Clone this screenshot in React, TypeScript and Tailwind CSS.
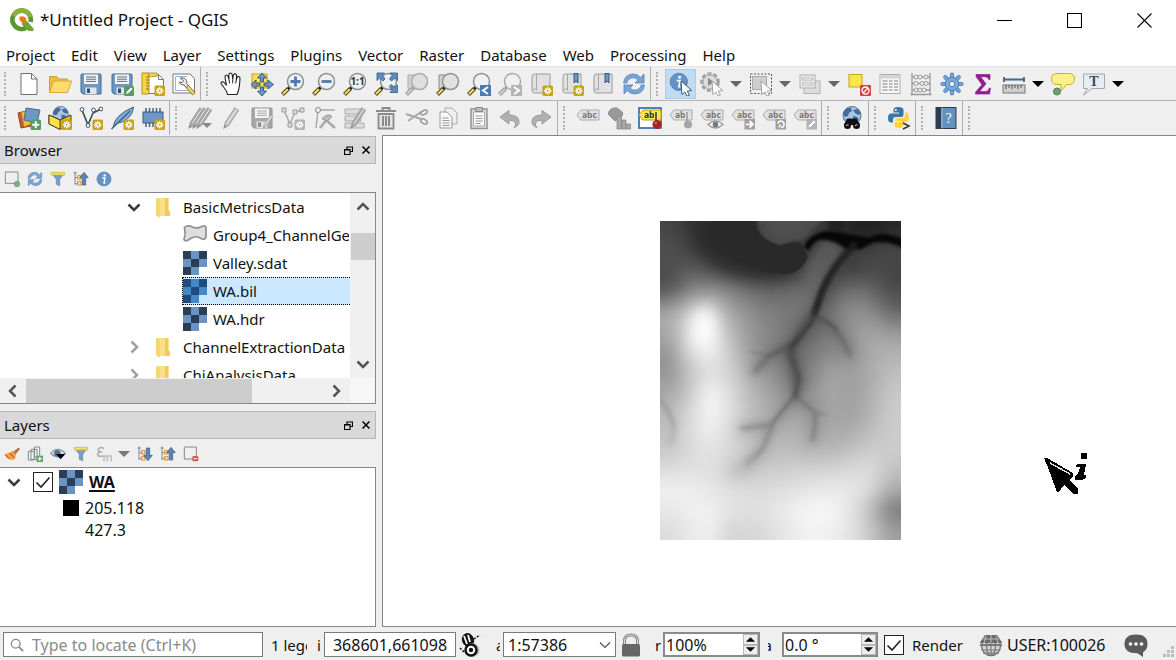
import React, { useState } from "react";

type Kids = { children?: React.ReactNode };

const Svg = ({ children, size = "size-6" }: Kids & { size?: string }) => (
  <svg viewBox="0 0 24 24" className={`${size} shrink-0`} fill="none" aria-hidden="true">
    {children}
  </svg>
);

const NewBadge = ({ gray = false }: { gray?: boolean }) => (
  <g>
    <rect x="13.500" y="13.500" width="10.500" height="10.500" rx="1.600" fill={gray ? "#b4b4b4" : "#c8a312"} />
    <path d="M18.750 15v7.500M15 18.750h7.500M16.200 16.200l5.100 5.100M21.300 16.200l-5.100 5.100" stroke="#fff" strokeWidth="1.300" />
    <circle cx="18.750" cy="18.750" r="1" fill={gray ? "#b4b4b4" : "#c8a312"} />
  </g>
);

const Lens = ({ gray = false, fill = "#eef1f3", children }: Kids & { gray?: boolean; fill?: string }) => (
  <g>
    <path d="M1.500 22.500l6-6" stroke={gray ? "#9b9b9b" : "#4b4420"} strokeWidth="4" />
    <path d="M2 22l5-5" stroke={gray ? "#cfcfcf" : "#f5dc5a"} strokeWidth="2.200" />
    <path d="M7 17l3-3" stroke={gray ? "#a5a5a5" : "#1c1c1c"} strokeWidth="2.800" />
    <circle cx="14.500" cy="9.500" r="8" fill={fill} stroke={gray ? "#a9a9a9" : "#8b8f92"} strokeWidth="1.500" />
    {children}
  </g>
);

const Floppy = ({ gray = false }: { gray?: boolean }) => (
  <g>
    <path d="M2 3q0-1 1-1h18q1 0 1 1v19H4l-2-2z" fill={gray ? "#a8a8a8" : "#6d97c4"} stroke={gray ? "#8e8e8e" : "#48698d"} />
    <rect x="5" y="2.500" width="14" height="9.500" fill="#f4f4f4" />
    <path d="M7 5h10M7 7.200h10M7 9.400h10" stroke={gray ? "#a8a8a8" : "#5d6b78"} />
    <rect x="6.500" y="15.500" width="11" height="6.500" fill="#dfe5ea" />
    <rect x="8" y="16.500" width="3" height="4.500" fill={gray ? "#8e8e8e" : "#33506e"} />
  </g>
);

const Pencil = ({ dx = 0, fill = "#c8c8c8" }: { dx?: number; fill?: string }) => (
  <g transform={`translate(${dx} 0)`}>
    <path d="M5 22l1.300-5.500L15.800 2l3.600 2.300L9.800 19z" fill={fill} stroke="#a3a3a3" strokeWidth="1.100" />
    <path d="M8.200 17.600L17.600 3.200" stroke="#f0f0f0" strokeWidth="1" />
    <path d="M5 22l.8-2.800 1.700 1.100z" fill="#888" />
  </g>
);

const Arrow = ({ gray = false }: { gray?: boolean }) => (
  <path d="M12 9l10.800 9.500-4.600.6 2.200 4.100-2.400 1-2.100-4.200-3 2.600z" fill="#fff" stroke={gray ? "#a2a2a2" : "#44586c"} strokeWidth="1" />
);

const Sheet = ({ x = 3 }: { x?: number }) => (
  <g transform={`translate(${x} 0)`}>
    <path d="M4 2h14v19H2.500Q0 21 0 18.500V5q0-3 2.500-3z" fill="#e1e1e1" stroke="#9a9a9a" />
    <path d="M4.500 2v16.500M0 18.500q.5-1.500 2.500-1.500h2" stroke="#a8a8a8" />
  </g>
);

const Ribbon = ({ x = 14 }: { x?: number }) => (
  <path d={`M${x} 1.500h4v9.500l-2-2-2 2z`} fill="#6d97c4" stroke="#36577b" />
);

const Tag = ({ text = "abc", color = false }: { text?: string; color?: boolean }) => (
  <g>
    <path d="M1 9l4-5h18v10H5z" fill={color ? "#fce94f" : "#e2e2e2"} stroke={color ? "#c4a000" : "#aaa"} />
    <text x="6" y="12" fontSize="8.500" fontWeight="700" fontFamily="Noto Sans, sans-serif" fill={color ? "#333" : "#777"}>
      {text}
    </text>
  </g>
);

const Refresh = () => (
  <g>
    <path d="M1.500 11Q2.500 2.500 11 2q5 0 7.500 3.500L22 2v9h-9l3-3q-2-2.300-5-2.200-5 .2-6.200 5.200z" fill="#78a5d6" stroke="#5684b7" strokeWidth=".8" />
    <path d="M22.500 13Q21.500 21.500 13 22q-5 0-7.500-3.500L2 22v-9h9l-3 3q2 2.300 5 2.200 5-.2 6.200-5.200z" fill="#78a5d6" stroke="#5684b7" strokeWidth=".8" />
  </g>
);

const Funnel = () => (
  <g>
    <path d="M2.500 3.500h19l-7 9V22l-5-2v-7.500z" fill="#7aa0c8" stroke="#5a7da3" />
    <path d="M2 2h20v4H2z" fill="#f2e15c" stroke="#c7b340" />
  </g>
);

const Info = () => (
  <g>
    <circle cx="12" cy="12" r="10.500" fill="#6593c6" stroke="#4f7aa9" />
    <circle cx="13" cy="6.500" r="1.800" fill="#fff" />
    <path d="M9.500 10.500h4l-1.500 7.500h2" stroke="#fff" strokeWidth="2" />
  </g>
);

const Globe = () => (
  <g>
    <circle cx="12" cy="9.500" r="9" fill="#a9c5e3" stroke="#4f6f95" />
    <path d="M5 4q3-3 6-2l1 3-3 2-1 3-3 1-2-3zM13 4l5-1 3 5-3 1-3-2zM13 10l4 1 2 2-4 5-2-3zM4 13l4 1v3z" fill="#456b9a" />
  </g>
);

const TreeArrow = ({ up = true }: { up?: boolean }) => (
  <g>
    <path d="M3 1v20M1 3h5M3 10h5M3 19h5" stroke="#888" strokeWidth="1.500" />
    <rect x="7" y="7" width="5" height="5" fill="#fce7c4" stroke="#e28b2d" strokeWidth="1.500" />
    <rect x="7" y="16" width="5" height="5" fill="#fce7c4" stroke="#e28b2d" strokeWidth="1.500" />
    <path
      d={up ? "M16.500 2l6.500 8h-4v11h-5V10h-4z" : "M16.500 22l6.500-8h-4V3h-5v11h-4z"}
      fill="#5b86b4"
      stroke="#35587f"
    />
  </g>
);

type Tool = { name: string; art: React.ReactNode; menu?: "gray" | "black"; active?: boolean };

const fileTools: Tool[] = [
  { name: "New Project", art: <><path d="M4 1.500h10.500L20 7v15.500H4z" fill="#fff" stroke="#6e6e6e" /><path d="M14.500 1.500V7H20" stroke="#6e6e6e" /></> },
  { name: "Open Project", art: <><path d="M1.500 20V4.500h7l2 2.500h9v4" fill="#eabf45" stroke="#cb9f35" /><path d="M1.500 20.500L5.500 9h18l-4 11.500z" fill="#fddb6d" stroke="#d6a83c" /></> },
  { name: "Save Project", art: <Floppy /> },
  { name: "Save Project As", art: <><Floppy /><rect x="14" y="14" width="10" height="10" rx="1.600" fill="#5a9a63" /><path d="M16 22l1-2.500 4-4 1.500 1.500-4 4z" fill="#fff" /></> },
  { name: "New Print Layout", art: <><path d="M3.500 2.500h14l5 5v14h-19z" fill="#fff" stroke="#777" /><path d="M17.500 2.500v5h5" stroke="#777" /><path d="M1 1h7v21H1z" fill="#f5d445" stroke="#b28f1c" /><path d="M8 1h8v3.500H8z" fill="#f5d445" stroke="#b28f1c" strokeWidth=".8" /><path d="M5 5h3M5 8h3M5 11h3M5 14h3M5 17h3" stroke="#8a7016" /><NewBadge /></> },
  { name: "Layout Manager", art: <><path d="M1 2h17l4.500 4.500V21H1z" fill="#fff" stroke="#777" /><path d="M3.500 4.500h12M3.500 4.500v14h15" stroke="#9cb6d2" /><path d="M14 13l8 9" stroke="#8a7a2c" strokeWidth="4" /><path d="M14.500 13.500l7 8" stroke="#f3dc70" strokeWidth="2.200" /><path d="M8 6q5-1 6.500 2.500.5 2 0 3l2 2.500-2 1.500-2.500-2.500q-3.500.5-5-3l3 .5 1.500-2z" fill="#e7e7e7" stroke="#666" /></> },
];

const navTools: Tool[] = [
  { name: "Pan Map", art: <><path d="M8.500 22.500q-.5-3.500-3.500-7L2.300 12q-.8-2 1-2.300 1.500 0 2.700 1.800l1.500 1.800L6 5.500q-.2-2 1.200-2.200T9.300 5l.7 2.500L9.800 3q.2-2 1.600-2t1.800 1.800l.5 4.500.6-4q.5-1.600 1.800-1.400t1.500 1.700L17.300 8l.7-2.500q.5-1.300 1.700-1t1.300 1.900q-.2 4-.7 8-.5 4-2.300 8.100z" fill="#fff" stroke="#222" strokeWidth="1.100" /><path d="M10 7.500l.7 4M13.700 7.300v4M17.300 8l-.6 3.500" stroke="#222" strokeWidth="1" /></> },
  { name: "Pan Map to Selection", art: <><rect x="2" y="2" width="15" height="14" fill="#fce04b" stroke="#c5a21f" /><path d="M12 1l4.500 5h-3v4h-3V6h-3zM12 24l4.500-5h-3v-4h-3v4h-3zM1 12.500L6 8v3h4v3H6v3zM23.500 12.500L18 8v3h-4v3h4v3z" fill="#6d97c4" stroke="#2f5175" strokeWidth=".9" /></> },
  { name: "Zoom In", art: <Lens><path d="M14.500 4.500v10M9.500 9.500h10" stroke="#4c7cae" strokeWidth="2.800" /></Lens> },
  { name: "Zoom Out", art: <Lens><path d="M9.500 9.500h10" stroke="#4c7cae" strokeWidth="2.800" /></Lens> },
  { name: "Zoom to Native Resolution", art: <Lens><text x="14.500" y="13" textAnchor="middle" fontSize="10" fontWeight="700" fontFamily="Noto Sans, sans-serif" fill="#333">1:1</text></Lens> },
  { name: "Zoom Full", art: <Lens><path d="M3 1h7.500L8.300 3.300 11 7 9 9 5.500 6 3 8.500zM23.500 1H16l2.200 2.300L15.500 7l2 2L21 6l2.500 2.500zM23.500 20.500H16l2.200-2.500-3-3.500 2-2 3.500 3 2.800-2.500z" fill="#5d8dbd" stroke="#335a84" strokeWidth=".8" /></Lens> },
  { name: "Zoom to Selection", art: <><path d="M3 3h9v14H3z" fill="#d2d2d2" stroke="#aaa" /><Lens gray fill="#dedede" /></> },
  { name: "Zoom to Layer", art: <><path d="M3 3h9v14H3z" fill="#d2d2d2" stroke="#888" /><Lens fill="#e1e1db" /></> },
  { name: "Zoom Last", art: <><Lens /><rect x="13" y="13" width="11" height="11" fill="#4c7cae" /><path d="M21 15l-5 3.500 5 3.500" stroke="#fff" strokeWidth="2" /></> },
  { name: "Zoom Next", art: <><Lens gray /><rect x="13" y="13" width="11" height="11" fill="#b4b4b4" /><path d="M16 15l5 3.500-5 3.500" stroke="#fff" strokeWidth="2" /></> },
  { name: "New Map View", art: <><Sheet /><NewBadge /></> },
  { name: "New Spatial Bookmark", art: <><Sheet /><Ribbon /><NewBadge /></> },
  { name: "Show Spatial Bookmarks", art: <><Sheet x={3} /><Ribbon x={14} /></> },
  { name: "Refresh", art: <Refresh /> },
];

const attributeTools: Tool[] = [
  { name: "Identify Features", active: true, art: <><g transform="scale(.82)"><Info /></g><Arrow /></> },
  { name: "Run Feature Action", menu: "gray", art: <><circle cx="10" cy="10" r="8.500" fill="#d7d7d7" stroke="#a0a0a0" strokeWidth="2.600" strokeDasharray="4 2.200" /><circle cx="10" cy="10" r="7" fill="#dcdcdc" stroke="#aaa" /><path d="M8 6v8l6-4z" fill="#888" /><Arrow gray /></> },
  { name: "Select Features", menu: "gray", art: <><rect x="3.500" y="4.500" width="14" height="13" fill="#cfcfcf" stroke="#aaa" /><rect x="1.500" y="2" width="21" height="19.500" stroke="#555" strokeDasharray="2 1.500" /><Arrow gray /></> },
  { name: "Select by Value", menu: "gray", art: <><rect x="6" y="9" width="16" height="12.500" fill="#ddd" stroke="#b0b0b0" /><rect x="2" y="3" width="15" height="13" fill="#e8e8e8" stroke="#b0b0b0" /><path d="M4.500 6h10v2h-10zM4.500 11h10v2h-10z" fill="#fff" stroke="#aaa" strokeWidth=".8" /></> },
  { name: "Deselect Features", art: <><rect x="2" y="2.500" width="13" height="12.500" fill="#fce74a" stroke="#c5a21f" /><rect x="13" y="13" width="11" height="11" rx="1" fill="#d84141" /><circle cx="18.500" cy="18.500" r="3.500" stroke="#fff" strokeWidth="1.300" /><path d="M16 21l5-5" stroke="#fff" strokeWidth="1.300" /></> },
  { name: "Open Attribute Table", art: <><rect x="2" y="2.500" width="20" height="19" fill="#f6f6f6" stroke="#b0b0b0" /><path d="M2.500 3h19v3.500h-19z" fill="#d4d4d4" /><path d="M4.500 9h5M11 9h3.500M16 9h4M4.500 12h5M11 12h3.500M16 12h4M4.500 15h5M11 15h3.500M16 15h4M4.500 18h5M11 18h3.500M16 18h4" stroke="#a8a8a8" strokeWidth="1.300" /></> },
  { name: "Field Calculator", art: <><path d="M3 1v21M21 1v21M1.500 22.500h21M3 5h18M3 11.500h18M3 18h18" stroke="#999" strokeWidth="1.300" /><g fill="#f3f3f3" stroke="#999"><circle cx="7" cy="5" r="2" /><circle cx="11" cy="5" r="2" /><circle cx="17" cy="5" r="2" /><circle cx="7" cy="11.500" r="2" /><circle cx="13" cy="11.500" r="2" /><circle cx="17" cy="11.500" r="2" /><circle cx="7" cy="18" r="2" /><circle cx="11" cy="18" r="2" /><circle cx="15" cy="18" r="2" /></g></> },
  { name: "Toolbox", art: <><g stroke="#4d7db4" strokeWidth="4.200" strokeLinecap="round"><path d="M12 2.500v19M2.500 12h19M5.300 5.300l13.400 13.400M18.700 5.300L5.300 18.700" /></g><g stroke="#7ba8dc" strokeWidth="2.600" strokeLinecap="round"><path d="M12 2.500v19M2.500 12h19M5.300 5.300l13.400 13.400M18.700 5.300L5.300 18.700" /></g><circle cx="12" cy="12" r="6.800" fill="#7ba8dc" stroke="#4d7db4" /><circle cx="12" cy="12" r="2.800" fill="#eee" stroke="#4d7db4" /></> },
  { name: "Show Statistical Summary", art: <path d="M5 2.500h14v5h-1.200Q17 4.800 14 4.800H9.500l5.500 7-6.500 7.700h6q3 0 4-3.500h1l-1 6H4.500v-1.800L11 12.800 5 4.500z" fill="#961a96" stroke="#7e107e" strokeWidth=".6" /> },
  { name: "Measure Line", menu: "black", art: <><path d="M2 7.500h20M2 5v5M22 5v5" stroke="#3d658f" strokeWidth="1.800" /><rect x="1" y="13" width="22" height="8" fill="#cfcfcf" stroke="#777" /><path d="M4 13v4M7 13v3M10 13v4M13 13v3M16 13v4M19 13v3" stroke="#555" /></> },
  { name: "Show Map Tips", art: <><path d="M6 1.500h12q5.500 0 5.500 5.500t-5.500 5.500h-2.500L10 19v-6.500H6Q.5 12.500.5 7T6 1.500z" fill="#fdf088" stroke="#c9af37" /><circle cx="6" cy="19.500" r="3.500" fill="#6ca26f" stroke="#4b7e50" /></> },
  { name: "Text Annotation", menu: "black", art: <><path d="M1.500 2h21v14.500H10L1.500 23l4-6.500h-4z" fill="#e4edf3" stroke="#a3a9ae" /><text x="12" y="14" textAnchor="middle" fontSize="14" fontWeight="700" fontFamily="Liberation Serif, serif" fill="#3b4a4c">T</text></> },
];

const dataTools: Tool[] = [
  { name: "Data Source Manager", art: <><path d="M1 7l9-2 4 15-10 2z" fill="#d2562f" stroke="#963e20" /><path d="M4 6l11-2 2 13-10 4z" fill="#f0bc3c" stroke="#b27e20" /><path d="M9 2l14 2-3 13-13-3z" fill="#6d97c4" stroke="#456c96" /><rect x="13.500" y="13.500" width="10.500" height="10.500" rx="1.600" fill="#5a9a63" /><path d="M18.750 15.200v7M15.200 18.750h7" stroke="#fff" strokeWidth="2" /></> },
  { name: "New GeoPackage Layer", art: <><g transform="translate(2.500 0) scale(.85)"><Globe /></g><path d="M1 9l11 5 11-5v9l-11 5-11-5z" fill="#e4bb21" stroke="#4d3f0b" /><path d="M1 9l11 5v9.500L1 18z" fill="#fce04b" stroke="#4d3f0b" /><NewBadge /></> },
  { name: "New Shapefile Layer", art: <><path d="M3 4l6 15 5-12 8-4" stroke="#3c4f63" strokeWidth="1.700" /><g fill="#fff" stroke="#3c4f63"><circle cx="3" cy="3.500" r="1.900" /><circle cx="9" cy="19.500" r="1.900" /><circle cx="14.500" cy="4" r="1.900" /><circle cx="22" cy="3" r="1.900" /></g><NewBadge /></> },
  { name: "New SpatiaLite Layer", art: <><path d="M3 22Q4 9 23.500 1q-1 8-6 11.500-4 4-11 5z" fill="#7fabdb" stroke="#3e6288" /><path d="M1.500 23L20 5" stroke="#3e6288" strokeWidth="1.400" /><NewBadge /></> },
  { name: "New Memory Layer", art: <><path d="M5 2v19M8.500 2v19M12 2v19M15.500 2v19M19 2v19" stroke="#385a80" strokeWidth="1.400" /><rect x="2" y="6" width="20" height="11" fill="#6d97c4" stroke="#385a80" /><NewBadge /></> },
];

const editTools: Tool[] = [
  { name: "Current Edits", art: <><Pencil dx={-4} fill="#a6a6a6" /><Pencil dx={0} fill="#a6a6a6" /><Pencil dx={4} fill="#a6a6a6" /><path d="M14 17h10l-5 5z" fill="#888" /></> },
  { name: "Toggle Editing", art: <Pencil /> },
  { name: "Save Layer Edits", art: <><Floppy gray /><g transform="translate(10 8) scale(.65)"><Pencil /></g></> },
  { name: "Add Feature", art: <><path d="M3 4l6 14 5-12 7-2" stroke="#aaa" strokeWidth="1.500" /><g fill="#ddd" stroke="#999"><path d="M1 2h4v4H1zM7 17h4v4H7zM12 4h4v4h-4zM19 2h4v4h-4z" /></g><NewBadge gray /></> },
  { name: "Vertex Tool", art: <><path d="M4 22L6 4h17" stroke="#aaa" strokeWidth="1.500" /><circle cx="6" cy="4" r="2.500" fill="#eee" stroke="#888" /><path d="M8 22l9-11M13 13l10 9" stroke="#aaa" strokeWidth="2.600" /><path d="M10 13q3-5 8-4l2 2-5 4z" fill="#bbb" stroke="#999" /></> },
  { name: "Modify Attributes", art: <><path d="M2 3h16v5H2zM2 10h16v5H2zM2 17h19v5H2z" fill="#ddd" stroke="#aaa" /><Pencil dx={3} fill="#aaa" /></> },
  { name: "Delete Selected", art: <><path d="M4.500 8h15v14.500h-15z" fill="#e4e4e4" stroke="#8a8a8a" strokeWidth="1.800" /><path d="M2 5h20M8.500 4V2h7v2M9 10v10M12 10v10M15 10v10" stroke="#8a8a8a" strokeWidth="2" /></> },
  { name: "Cut Features", art: <><path d="M1 8l15 5M3 15l13-9" stroke="#a8a8a8" strokeWidth="2" /><ellipse cx="19" cy="6.500" rx="3.500" ry="2" stroke="#999" strokeWidth="1.600" transform="rotate(-25 19 6.500)" /><ellipse cx="19" cy="15.500" rx="3.500" ry="2.200" stroke="#999" strokeWidth="1.600" transform="rotate(30 19 15.500)" /></> },
  { name: "Copy Features", art: <><path d="M9 2h7l5 5v11H9z" fill="#eee" stroke="#aaa" /><path d="M4 6h7l5 5v11H4z" fill="#f7f7f7" stroke="#9a9a9a" /><path d="M6.500 12h6M6.500 14.500h7M6.500 17h7M6.500 19.500h7" stroke="#999" /></> },
  { name: "Paste Features", art: <><path d="M4 3h16v19.500H4z" fill="#ddd" stroke="#949494" strokeWidth="1.500" /><path d="M6.500 6h11v14h-11z" fill="#fafafa" stroke="#aaa" /><path d="M8.500 1.500h7v4h-7z" fill="#bbb" stroke="#888" /><path d="M8.500 10h7M8.500 12.500h7M8.500 15h7M8.500 17.500h5" stroke="#999" /></> },
  { name: "Undo", art: <path d="M2 11l9-6.500V9q10 0 10 7 0 4-5 5.500 2.500-2.500 1.500-4.500Q16 14 11 14v4z" fill="#b0b0b0" stroke="#999" /> },
  { name: "Redo", art: <path d="M22 11l-9-6.500V9Q3 9 3 16q0 4 5 5.500Q5.500 19 6.500 17 8 14 13 14v4z" fill="#b0b0b0" stroke="#999" /> },
];

const labelTools: Tool[] = [
  { name: "Layer Labeling Options", art: <Tag /> },
  { name: "Layer Diagram Options", art: <><path d="M1.500 8.500a6.500 6.500 0 0 1 12-3.500q3 .5 2 4.500L8 15z" fill="#9a9a9a" stroke="#888" /><path d="M10 10h4.500v13H10zM15 14h4v9h-4zM19.500 18h4v5h-4z" fill="#a8a8a8" stroke="#888" strokeWidth=".8" /></> },
  { name: "Highlight Pinned Labels", art: <><rect x="1" y="2" width="22" height="20" fill="#fff" stroke="#2566a8" strokeWidth="1.600" /><Tag text="ab" color /><path d="M18 6v10" stroke="#333" strokeWidth="1.500" /><circle cx="19" cy="18.500" r="4.500" fill="#a92126" /><circle cx="17.800" cy="17" r="1.300" fill="#d86669" /></> },
  { name: "Pin Labels", art: <><Tag text="ab" /><path d="M18 6v10" stroke="#999" strokeWidth="1.500" /><circle cx="19" cy="18.500" r="4" fill="#a5a5a5" /></> },
  { name: "Show or Hide Labels", art: <><Tag /><path d="M8 18.500q7.500-7 15 0-7.500 7-15 0z" fill="#fff" stroke="#999" strokeWidth="1.300" /><circle cx="15.500" cy="18.500" r="2.800" fill="#777" /></> },
  { name: "Move Label", art: <><Tag /><rect x="13.500" y="13" width="10.500" height="10.500" fill="#a0a0a0" /><path d="M15 18.300h6M18.500 15l3.500 3.300-3.500 3.300" stroke="#fff" strokeWidth="1.800" /></> },
  { name: "Rotate Label", art: <><Tag /><rect x="13.500" y="13" width="10.500" height="10.500" fill="#a0a0a0" /><path d="M16 17.500q.5-2.500 3-2.500t3 3-3 3.500M17 21.500l1.500-3" stroke="#fff" strokeWidth="1.600" /></> },
  { name: "Change Label", art: <><Tag /><rect x="13.500" y="13" width="10.500" height="10.500" fill="#b4b4b4" /><path d="M15.500 21.500l1-2.500 4.500-4.500 1.500 1.500-4.500 4.500z" fill="#fff" /></> },
];

const searchTools: Tool[] = [
  { name: "MetaSearch", art: <><Globe /><path d="M5 19l3-5.500h3l1 3 1-3h3l3 5.500" fill="#111" stroke="#111" strokeWidth="2" /><circle cx="7.500" cy="19.500" r="3.500" fill="#111" /><circle cx="16.500" cy="19.500" r="3.500" fill="#111" /><path d="M6 20q1-2 2.500-1M15 20q1-2 2.500-1" stroke="#ddd" /></> },
];
const pythonTools: Tool[] = [
  { name: "Python Console", art: <><path d="M11 1Q6.500 1 6.500 4v2.500H12v1H4Q1 7.500 1 12t3 4.500h2v-3q0-2.500 3-2.500h5q2.500 0 2.500-2.500V4Q16.500 1 11 1z" fill="#3a75a8" /><circle cx="8.800" cy="3.900" r="1" fill="#fff" /><path d="M12 22q-4.500 0-4.500-3v-3H13v-1H8q0-3 3-3h4q3 0 3-3V6.500h1.500Q22 7 22 11.500T19.500 16h-3v3q0 3-4.500 3z" fill="#fcd346" /><path d="M16 17l6 3-6 3" stroke="#333" strokeWidth="1.500" /></> },
];
const helpTools: Tool[] = [
  { name: "Help Contents", art: <><rect x="2" y="1.500" width="20" height="21" fill="#6291c1" stroke="#2d3c4c" /><path d="M2 1.500h5v21H2z" fill="#2c3e50" /><path d="M8 1.500v21" stroke="#a3bcd6" /><text x="14.500" y="17" textAnchor="middle" fontSize="14" fontFamily="Liberation Serif, serif" fill="#fff">?</text></> },
];

const Grip = () => (
  <span className="flex w-[13px] shrink-0 items-center justify-start pl-1">
    <span className="h-6 w-0 border-l-2 border-dotted border-[#b2b2b2]" />
  </span>
);

const ToolGroup = ({ label, tools, last = false }: { label: string; tools: Tool[]; last?: boolean }) => (
  <div role="toolbar" aria-label={label} className={`flex shrink-0 items-stretch ${last ? "" : "border-r border-[#adadad] pr-px"}`}>
    <Grip />
    {tools.map((t) => (
      <div key={t.name} className="flex items-center">
        <button
          type="button"
          aria-label={t.name}
          className={`flex h-[30px] w-[31px] items-center justify-center ${t.active ? "border border-[#a5cdee] bg-[#bfdcf3]" : ""}`}
        >
          <Svg>{t.art}</Svg>
        </button>
        {t.menu && (
          <button type="button" aria-label={`${t.name} options`} className="flex h-[30px] w-[18px] items-center justify-center">
            <svg viewBox="0 0 12 6" className="h-1.5 w-3" aria-hidden="true">
              <path d="M0 0h12L6 6z" fill={t.menu === "black" ? "#000" : "#666"} />
            </svg>
          </button>
        )}
      </div>
    ))}
  </div>
);

const RasterIcon = ({ selected = false }: { selected?: boolean }) => {
  const dark = selected ? "#1e4d7b" : "#2c3e55";
  const light = selected ? "#4289cc" : "#6a94c6";
  const cells = [dark, light, dark, light, dark, light, dark, light];
  return (
    <Svg>
      {cells.map((c, i) => (
        <rect key={i} x={(i % 3) * 8} y={Math.floor(i / 3) * 8} width="8" height="8" fill={c} />
      ))}
    </Svg>
  );
};

const FolderIcon = () => (
  <Svg>
    <path d="M6 3h13v14l1 2v2H7z" fill="#fbe08a" />
    <path d="M15 3h3v13h2v5h-5z" fill="#f1cb62" />
    <path d="M6 3l4 2v18l-4-3z" fill="#f7d573" />
  </Svg>
);

const Chevron = ({ dir, color = "#555", w = 2.5 }: { dir: "up" | "down" | "left" | "right"; color?: string; w?: number }) => {
  const d = { up: "M2.500 10.500L8 5l5.500 5.500", down: "M2.500 5.500L8 11l5.500-5.500", left: "M10.500 2.500L5 8l5.500 5.500", right: "M5.500 2.500L11 8l-5.500 5.500" }[dir];
  return (
    <svg viewBox="0 0 16 16" className="size-4 shrink-0" fill="none" aria-hidden="true">
      <path d={d} stroke={color} strokeWidth={w} />
    </svg>
  );
};

const DockTitle = ({ title }: { title: string }) => (
  <header className="flex h-7 shrink-0 items-center border border-l-0 border-[#b5b5b5] bg-[#d9d9d9] pl-1">
    <h2 className="flex-1">{title}</h2>
    <button type="button" aria-label={`Float ${title}`} className="flex size-[18px] items-center justify-center">
      <svg viewBox="0 0 9 9" className="size-[9px]" fill="none" aria-hidden="true">
        <path d="M3 3V1h5.500v4.500H6.500M3 1h5.500" stroke="#000" strokeWidth="1.200" />
        <path d="M.5 3.500h5.500v5H.5zM.5 4h5.500" stroke="#000" strokeWidth="1.200" />
      </svg>
    </button>
    <button type="button" aria-label={`Close ${title}`} className="flex size-[18px] items-center justify-center">
      <svg viewBox="0 0 8 8" className="size-2" aria-hidden="true">
        <path d="M.5.5l7 7M7.500.5l-7 7" stroke="#000" strokeWidth="1.500" />
      </svg>
    </button>
  </header>
);

const PanelButton = ({ label, children }: Kids & { label: string }) => (
  <button type="button" aria-label={label} className="flex size-[23px] items-center justify-center">
    <Svg size="size-4">{children}</Svg>
  </button>
);

const TreeRow = ({ label, kind, open, selected }: { label: string; kind: "folder" | "vector" | "raster"; open?: boolean; selected?: boolean }) =>
  kind === "folder" ? (
    <li className="flex h-7 shrink-0 items-center pl-[126px]">
      <Chevron dir={open ? "down" : "right"} color={open ? "#3c3c3c" : "#a0a0a0"} />
      <span className="ml-2 flex w-[33px]"><FolderIcon /></span>
      <span className="whitespace-nowrap">{label}</span>
    </li>
  ) : (
    <li className="flex h-7 shrink-0 pl-[182px]">
      <span className={`flex flex-1 items-center gap-1.5 overflow-hidden whitespace-nowrap ${selected ? "border border-r-0 border-dotted border-black bg-[#cce8ff]" : "border border-transparent"}`}>
        {kind === "raster" ? (
          <RasterIcon selected={selected} />
        ) : (
          <Svg>
            <path d="M1.500 4.500q3-3 8-.5 5 2 9-.5 4-1.500 4.500 1v9.500q-1 3.500-5 1.500-5-3.500-10.500 0-5 4-6.500 1 2-6 .5-12z" fill="#dedede" stroke="#8f8f8f" strokeWidth="1.700" />
          </Svg>
        )}
        <span>{label}</span>
      </span>
    </li>
  );

const heights = [
  [70, 60, 48, 42, 42, 75, 80, 60, 50, 35, 30, 40],
  [82, 68, 52, 42, 42, 42, 42, 60, 80, 60, 70, 75],
  [75, 92, 78, 65, 52, 50, 58, 90, 80, 60, 75, 66],
  [85, 135, 150, 130, 110, 100, 108, 112, 95, 115, 105, 75],
  [165, 205, 225, 165, 140, 125, 120, 118, 115, 145, 140, 100],
  [170, 230, 245, 185, 150, 132, 120, 105, 118, 148, 165, 150],
  [150, 225, 250, 200, 155, 130, 118, 120, 135, 145, 172, 178],
  [145, 195, 222, 208, 175, 140, 122, 130, 162, 155, 170, 188],
  [165, 198, 248, 218, 185, 160, 135, 142, 170, 158, 172, 200],
  [182, 215, 250, 225, 190, 170, 158, 158, 165, 158, 178, 204],
  [192, 220, 240, 218, 192, 178, 178, 168, 168, 170, 188, 204],
  [200, 216, 228, 216, 196, 188, 188, 184, 182, 192, 206, 205],
  [220, 224, 224, 208, 200, 203, 208, 211, 213, 218, 222, 192],
  [242, 238, 230, 224, 218, 220, 225, 230, 234, 232, 218, 170],
  [232, 240, 242, 228, 224, 228, 240, 248, 248, 230, 188, 118],
  [220, 232, 242, 210, 214, 220, 234, 242, 240, 228, 200, 158],
];

const Terrain = () => (
  <svg viewBox="60 33 723 957" className="h-[319px] w-[241px]" fill="none" strokeLinecap="round" strokeLinejoin="round" role="img" aria-label="WA raster layer">
    <defs>
      <filter id="soft" filterUnits="userSpaceOnUse" x="-60" y="-90" width="970" height="1200" colorInterpolationFilters="sRGB"><feGaussianBlur stdDeviation="30" /></filter>
      <filter id="wide" filterUnits="userSpaceOnUse" x="-60" y="-90" width="970" height="1200" colorInterpolationFilters="sRGB"><feGaussianBlur stdDeviation="20" /></filter>
      <filter id="mid" filterUnits="userSpaceOnUse" x="-60" y="-90" width="970" height="1200" colorInterpolationFilters="sRGB"><feGaussianBlur stdDeviation="9" /></filter>
      <filter id="fine" filterUnits="userSpaceOnUse" x="-60" y="-90" width="970" height="1200" colorInterpolationFilters="sRGB"><feGaussianBlur stdDeviation="4" /></filter>
      <filter id="edge" filterUnits="userSpaceOnUse" x="-60" y="-90" width="970" height="1200" colorInterpolationFilters="sRGB"><feGaussianBlur stdDeviation="2" /></filter>
    </defs>
    <g filter="url(#soft)">
      {Array.from({ length: 20 }, (_, r) =>
        Array.from({ length: 16 }, (_, c) => {
          const v = heights[Math.min(15, Math.max(0, r - 2))][Math.min(11, Math.max(0, c - 2))];
          return <rect key={`${r}-${c}`} x={60 + (c - 2) * 60.25} y={33 + (r - 2) * 59.8} width="61.500" height="61" fill={`rgb(${v},${v},${v})`} />;
        }),
      )}
    </g>
    <g filter="url(#wide)">
      <ellipse cx="190" cy="350" rx="32" ry="55" fill="#fff" opacity=".85" />
      <path d="M130 10H380V100L480 190 380 205 260 185 170 120z" fill="#2b2b2b" opacity=".8" />
      <path d="M640 120Q570 200 540 290L455 420 475 520" stroke="#3c3c3c" strokeWidth="44" opacity=".4" />
      <path d="M530 325Q590 350 630 430M450 405L380 440 340 490" stroke="#555" strokeWidth="26" opacity=".35" />
      <path d="M465 560L398 640 360 730 290 790M465 560L530 610 515 700M398 645L300 655" stroke="#707070" strokeWidth="30" opacity=".3" />
    </g>
    <g filter="url(#mid)">
      <path d="M505 165L550 90 612 108 590 150 530 235 500 260z" fill="#676767" opacity=".55" />
      <path d="M640 110Q590 160 565 215T522 310L465 395 448 425Q470 480 472 510T465 560" stroke="#333" strokeWidth="20" opacity=".5" />
      <path d="M530 322Q590 345 630 435M450 403L385 440 342 485" stroke="#484848" strokeWidth="11" opacity=".45" />
      <path d="M465 560L400 640 368 715 320 760M465 558L527 608 518 690M398 643L310 655" stroke="#505050" strokeWidth="10" opacity=".4" />
      <path d="M55 565Q90 600 102 650L93 700" stroke="#777" strokeWidth="11" opacity=".4" />
    </g>
    <g filter="url(#fine)">
      <path d="M205 0H350Q350 80 420 108 460 90 485 105L500 140Q485 180 440 188 380 192 320 168 255 140 215 90z" fill="#292929" />
      <path d="M352 20Q345 75 395 98 430 115 455 92 490 95 510 65L560 20z" fill="#525252" opacity=".75" />
      <path d="M492 112Q505 72 560 62L690 82Q730 58 800 92V122Q750 88 700 98L660 118H620Q585 88 545 88 518 92 508 122z" fill="#070707" />
      <path d="M565 20h45v50h-45z" fill="#111" opacity=".4" />
      <path d="M642 105Q600 150 580 180T545 245L524 308" stroke="#202020" strokeWidth="20" opacity=".85" />
      <path d="M524 302L517 335 475 385 455 412" stroke="#353535" strokeWidth="12" opacity=".65" />
      <path d="M455 412Q450 440 465 470T476 510 465 558" stroke="#484848" strokeWidth="9" opacity=".55" />
      <path d="M526 320Q565 330 588 358" stroke="#444" strokeWidth="7" opacity=".6" />
      <path d="M588 358Q610 380 632 442" stroke="#555" strokeWidth="5" opacity=".35" />
      <path d="M455 400Q420 425 390 438" stroke="#484848" strokeWidth="7" opacity=".5" />
      <path d="M390 438L345 485M385 436L330 425" stroke="#555" strokeWidth="5" opacity=".3" />
      <path d="M465 556Q430 595 400 635" stroke="#555" strokeWidth="7" opacity=".5" />
      <path d="M400 635L375 705 345 745M400 642L350 650 300 655" stroke="#666" strokeWidth="5" opacity=".35" />
      <path d="M468 560Q500 590 525 608 530 640 518 690M525 608L560 615" stroke="#666" strokeWidth="5" opacity=".45" />
      <path d="M60 570Q90 600 102 650" stroke="#888" strokeWidth="5" opacity=".4" />
    </g>
    <path filter="url(#edge)" d="M352 60Q365 90 420 108 455 90 485 102L503 140Q488 185 440 192 400 190 370 180L300 100z" fill="#292929" />
  </svg>
);

const Spin = ({ id, label, value, width }: { id: string; label: string; value: string; width: string }) => (
  <div className={`flex h-[25px] shrink-0 border-2 border-[#8a8a8a] bg-white ${width}`}>
    <input id={id} aria-label={label} defaultValue={value} className="w-0 flex-1 bg-transparent pl-px outline-none" />
    <div className="flex w-[15px] flex-col bg-[#eee]">
      {["M1 5h10L6 0z", "M1 0h10L6 5z"].map((d, i) => (
        <button key={d} type="button" aria-label={`${i ? "Decrease" : "Increase"} ${label}`} className="flex flex-1 items-center justify-center border border-[#b8b8b8]">
          <svg viewBox="0 0 12 5" className="h-[5px] w-[11px]" aria-hidden="true"><path d={d} fill="#000" /></svg>
        </button>
      ))}
    </div>
  </div>
);

const Check = ({ id, label, checked, onChange }: { id: string; label: string; checked: boolean; onChange: (v: boolean) => void }) => (
  <span className="grid size-5 shrink-0 place-items-center">
    <input
      id={id}
      type="checkbox"
      aria-label={label}
      checked={checked}
      onChange={(e) => onChange(e.target.checked)}
      className="col-start-1 row-start-1 size-5 appearance-none border border-[#222] bg-white"
    />
    {checked && (
      <svg viewBox="0 0 16 16" className="pointer-events-none col-start-1 row-start-1 size-4" fill="none" aria-hidden="true">
        <path d="M1.500 8.500L6 13 14.500 3.500" stroke="#222" strokeWidth="1.600" />
      </svg>
    )}
  </span>
);

export default function App() {
  const [visible, setVisible] = useState(true);
  const [render, setRender] = useState(true);
  const menus = ["Project", "Edit", "View", "Layer", "Settings", "Plugins", "Vector", "Raster", "Database", "Web", "Processing", "Help"];

  return (
    <div className="flex h-screen flex-col overflow-hidden bg-[#efefef] font-['Noto_Sans',sans-serif] text-[15px] leading-5 text-[#111]">
      <header className="flex h-10 shrink-0 items-center bg-white pl-2.5">
        <svg viewBox="0 0 24 24" className="size-6 shrink-0" fill="none" aria-hidden="true">
          <path d="M17.500 18.800A9.200 9.200 0 1 1 20.500 14" stroke="#589632" strokeWidth="4.600" />
          <path d="M3.500 8A9.200 9.200 0 0 1 20.600 9" stroke="#8cb03c" strokeWidth="4.600" />
          <path d="M12 11.500l5 1.500 6.500 7.500v2.500h-5L12 16.500z" fill="#6da63a" />
          <path d="M9.500 8.500h4.500l2.500 2.500-1 3.500-3 .5-3-3z" fill="#ee7913" />
        </svg>
        <h1 className="ml-1.5 flex-1 text-[17px]">*Untitled Project - QGIS</h1>
        <div className="flex gap-1.5">
          {[["Minimize", "M0 7.500h15"], ["Maximize", "M.5.5h14v14H.5z"], ["Close", "M.5.5l14 14M14.500.5l-14 14"]].map(([n, d]) => (
            <button key={n} type="button" aria-label={n} className="flex h-10 w-16 items-center justify-center">
              <svg viewBox="0 0 15 15" className="size-[15px]" fill="none" aria-hidden="true"><path d={d} stroke="#000" strokeWidth="1.100" /></svg>
            </button>
          ))}
        </div>
      </header>

      <nav aria-label="Main menu" className="flex h-[27px] shrink-0 items-center gap-4 border-b border-[#e3e3e3] bg-white px-1.5 pt-[3px]">
        {menus.map((m) => (
          <button key={m} type="button">{m}</button>
        ))}
      </nav>

      <div className="flex h-[34px] shrink-0 items-stretch gap-px border-b border-[#b5b5b5]">
        <ToolGroup label="Project" tools={fileTools} />
        <ToolGroup label="Map Navigation" tools={navTools} />
        <ToolGroup label="Attributes" tools={attributeTools} last />
      </div>
      <div className="flex h-[34px] shrink-0 items-stretch gap-px">
        <ToolGroup label="Data Source" tools={dataTools} />
        <ToolGroup label="Digitizing" tools={editTools} />
        <ToolGroup label="Labels" tools={labelTools} />
        <ToolGroup label="Web" tools={searchTools} />
        <ToolGroup label="Plugins" tools={pythonTools} />
        <ToolGroup label="Help" tools={helpTools} />
        <Grip />
      </div>

      <div className="flex min-h-0 flex-1">
        <aside className="flex w-[376px] shrink-0 flex-col pt-px">
          <section aria-label="Browser" className="flex h-[268px] shrink-0 flex-col">
            <DockTitle title="Browser" />
            <div className="flex h-7 shrink-0 items-center pt-px">
              <PanelButton label="Add Selected Layers"><path d="M2 1.500h19v17H2z" stroke="#888" strokeWidth="1.500" /><circle cx="19.500" cy="19.500" r="4" fill="#86b488" stroke="#538657" /></PanelButton>
              <PanelButton label="Refresh Browser"><Refresh /></PanelButton>
              <PanelButton label="Filter Browser"><Funnel /></PanelButton>
              <PanelButton label="Collapse All"><TreeArrow /></PanelButton>
              <PanelButton label="Show Properties"><Info /></PanelButton>
            </div>
            <div className="flex min-h-0 flex-1 flex-col border border-l-0 border-[#828790] bg-white">
              <div className="flex min-h-0 flex-1">
                <ul className="flex min-w-0 flex-1 flex-col overflow-hidden">
                  <TreeRow label="BasicMetricsData" kind="folder" open />
                  <TreeRow label="Group4_ChannelGeometry" kind="vector" />
                  <TreeRow label="Valley.sdat" kind="raster" />
                  <TreeRow label="WA.bil" kind="raster" selected />
                  <TreeRow label="WA.hdr" kind="raster" />
                  <TreeRow label="ChannelExtractionData" kind="folder" />
                  <TreeRow label="ChiAnalysisData" kind="folder" />
                </ul>
                <div className="flex w-[25px] shrink-0 flex-col items-center bg-[#f0f0f0]">
                  <button type="button" aria-label="Scroll up" className="flex h-7 items-center"><Chevron dir="up" /></button>
                  <div className="mt-3 h-[27px] w-6 bg-[#cdcdcd]" />
                  <div className="flex-1" />
                  <button type="button" aria-label="Scroll down" className="flex h-7 items-center"><Chevron dir="down" /></button>
                </div>
              </div>
              <div className="flex h-[25px] shrink-0 items-center bg-[#f0f0f0]">
                <button type="button" aria-label="Scroll left" className="flex w-[26px] justify-center"><Chevron dir="left" /></button>
                <div className="h-6 w-[226px] bg-[#cdcdcd]" />
                <div className="flex-1" />
                <button type="button" aria-label="Scroll right" className="flex w-7 justify-center"><Chevron dir="right" /></button>
                <div className="w-[25px] self-stretch bg-[#f6f6f6]" />
              </div>
            </div>
          </section>

          <section aria-label="Layers" className="mt-[7px] flex min-h-0 flex-1 flex-col">
            <DockTitle title="Layers" />
            <div className="flex h-7 shrink-0 items-center pt-px">
              <PanelButton label="Layer Styling"><path d="M14 9l8-6 1 2-7 8z" fill="#c8763c" stroke="#8a5020" /><path d="M1 12l8-2 3-3 6 7-2 6-5 1-7-3z" fill="#f0a63c" /><path d="M2 13l6 6M8 10l8 8" stroke="#d9653a" strokeWidth="2" /></PanelButton>
              <PanelButton label="Add Group"><path d="M2 8h9v13H2zM6 5h9v15H6zM11 1.500h8v15h-8z" fill="#eff3f4" stroke="#7c8a8c" strokeWidth="1.500" /><path d="M14.500 14.500H24V24h-9.500z" fill="#64a06a" /><path d="M19.200 16v6.500M16 19.200h6.500" stroke="#fff" strokeWidth="1.700" /></PanelButton>
              <PanelButton label="Manage Map Themes"><path d="M1 11Q11-1 23 11 12 22 1 11z" fill="#dfe7ee" stroke="#8c9aa5" strokeWidth="2" /><circle cx="11" cy="11" r="5" fill="#54708c" /><path d="M9 12h14l-7 8z" fill="#000" /></PanelButton>
              <PanelButton label="Filter Legend"><Funnel /></PanelButton>
              <PanelButton label="Filter Legend by Expression"><path d="M12 4Q8 1 4.500 3.500T7 9q-5 .5-4.500 4t8.500 2" stroke="#aaa" strokeWidth="2.300" /><path d="M12 23v-8h5v8M17 15h6v8" stroke="#c0c0c0" strokeWidth="2.500" /></PanelButton>
              <button type="button" aria-label="Expression filter options" className="flex w-[18px] justify-center">
                <svg viewBox="0 0 12 6" className="h-1.5 w-3" aria-hidden="true"><path d="M0 0h12L6 6z" fill="#777" /></svg>
              </button>
              <PanelButton label="Expand All"><TreeArrow up={false} /></PanelButton>
              <PanelButton label="Collapse All Layers"><TreeArrow /></PanelButton>
              <PanelButton label="Remove Layer"><path d="M2 1.500h18v18H2z" stroke="#888" strokeWidth="1.500" /><rect x="14" y="15" width="9" height="8" rx="2" fill="#df5555" /><path d="M16 19h5" stroke="#fff" strokeWidth="1.500" /></PanelButton>
            </div>
            <div className="min-h-0 flex-1 border border-l-0 border-[#828790] bg-white text-base leading-5">
              <div className="flex h-7 items-center pl-1.5">
                <Chevron dir="down" color="#3c3c3c" />
                <span className="mr-1.5 ml-[11px] flex"><Check id="layer-wa" label="Show layer WA" checked={visible} onChange={setVisible} /></span>
                <RasterIcon />
                <label htmlFor="layer-wa" className="ml-1.5 font-bold underline decoration-2 underline-offset-2">WA</label>
              </div>
              <div className="flex h-6 items-center gap-1.5 pl-[63px]">
                <span className="size-4 bg-black" />
                <span>205.118</span>
              </div>
              <div className="flex h-5 items-center pl-[85px]">427.3</div>
            </div>
          </section>
        </aside>

        <main className="relative ml-1.5 flex min-w-0 flex-1 items-start justify-center border border-r-0 border-[#828790] bg-white pt-[85px] pl-0.5">
          <Terrain />
          <svg viewBox="0 0 44 44" className="absolute top-[317px] left-[661px] size-11" fill="none" shapeRendering="crispEdges" aria-hidden="true">
            <path d="M0 5h3l26 15v4l-4 3 9 9v5h-5L20 32l-5 7h-2L3 12z" fill="#000" />
            <path d="M6 10l20 11" stroke="#ddd" strokeWidth="1.500" />
            <rect x="37" y="0" width="6" height="6" rx="1" fill="#000" />
            <path d="M33 11h9l-2 11h2v3l-4 2h-7v-4l3-2 2-7h-4z" fill="#000" />
          </svg>
        </main>
      </div>

      <footer className="flex h-[33px] shrink-0 items-center pr-px pb-0.5 pl-[3px] pt-1 text-base leading-5">
        <div className="flex h-[25px] w-[260px] shrink-0 items-center gap-2 border border-[#7a7a7a] bg-white px-1.5">
          <svg viewBox="0 0 16 16" className="size-3.5 shrink-0" fill="none" aria-hidden="true">
            <circle cx="6.500" cy="6.500" r="5" stroke="#888" strokeWidth="1.500" /><path d="M10 10l5 5" stroke="#888" strokeWidth="2" />
          </svg>
          <input aria-label="Locate" placeholder="Type to locate (Ctrl+K)" className="w-0 flex-1 outline-none placeholder:text-[#8a8a8a]" />
        </div>
        <span className="ml-2 w-9 shrink-0 overflow-hidden whitespace-nowrap text-[15px]">1 lege</span>
        <span className="ml-2.5 w-[5px] shrink-0 overflow-hidden text-[15px]">i</span>
        <input aria-label="Coordinate" defaultValue="368601,661098" className="ml-0.5 h-[25px] w-[132px] shrink-0 border border-[#7a7a7a] bg-white text-center" />
        <button type="button" aria-label="Toggle extents" className="ml-[3px] flex shrink-0">
          <Svg>
            <ellipse cx="9" cy="7" rx="6" ry="7" fill="#111" transform="rotate(-20 9 7)" />
            <path d="M5 3l3 8M9 2l2 7" stroke="#fff" strokeWidth="1.800" />
            <circle cx="13.500" cy="17" r="7" fill="#bbb" />
            <circle cx="12" cy="17" r="5.500" fill="#fff" stroke="#111" strokeWidth="2.500" />
            <circle cx="12" cy="17" r="2.200" fill="#111" />
            <path d="M15 6l6-4M1 15l4 4" stroke="#111" strokeWidth="1.500" strokeDasharray="2 1.500" />
          </Svg>
        </button>
        <label htmlFor="scale" className="ml-[13px] w-1 shrink-0 overflow-hidden text-[15px]">a</label>
        <div className="ml-[3px] grid h-[25px] w-[113px] shrink-0 items-center border border-[#7a7a7a] bg-white">
          <select id="scale" className="col-start-1 row-start-1 w-full appearance-none pl-1 outline-none"><option>1:57386</option></select>
          <svg viewBox="0 0 12 8" className="pointer-events-none col-start-1 row-start-1 mr-1 h-2 w-3 justify-self-end" fill="none" aria-hidden="true"><path d="M1 1.500l5 5 5-5" stroke="#555" strokeWidth="1.200" /></svg>
        </div>
        <button type="button" aria-label="Lock scale" className="ml-[3px] flex shrink-0">
          <Svg>
            <path d="M5.500 12V8q0-6 6.500-6t6.500 6v4" stroke="#888" strokeWidth="3" /><path d="M5.500 12V8q0-6 6.500-6t6.500 6v4" stroke="#ddd" />
            <rect x="3" y="11" width="18" height="12.500" rx="1.500" fill="#666" />
          </Svg>
        </button>
        <label htmlFor="magnifier" className="ml-3 w-1.5 shrink-0 overflow-hidden text-[15px]">r</label>
        <span className="ml-0.5 flex"><Spin id="magnifier" label="Magnifier" value="100%" width="w-[97px]" /></span>
        <label htmlFor="rotation" className="ml-2 flex w-1 shrink-0 justify-end overflow-hidden text-[15px]">a</label>
        <span className="ml-2.5 flex"><Spin id="rotation" label="Rotation" value="0.0 °" width="w-[96px]" /></span>
        <span className="ml-1.5 flex"><Check id="render" label="Render" checked={render} onChange={setRender} /></span>
        <label htmlFor="render" className="ml-2 shrink-0 text-[15px]">Render</label>
        <button type="button" className="ml-4 flex shrink-0 items-center gap-1 whitespace-nowrap">
          <Svg>
            <circle cx="12" cy="13" r="9.500" fill="#d5d5d5" stroke="#777" strokeWidth="1.500" />
            <ellipse cx="12" cy="13" rx="4.500" ry="9.500" stroke="#777" strokeWidth="1.300" />
            <path d="M12 3v20M3 17h18M4 20h16" stroke="#777" strokeWidth="1.200" />
            <path d="M6 2h12l5.500 8H.5z" fill="#6b6b6b" /><path d="M1 12h22" stroke="#777" strokeWidth="2" /><path d="M7 3l-2 7M12 2v8M17 3l2 7M4 6h16" stroke="#bbb" />
          </Svg>
          USER:100026
        </button>
        <div className="flex-1" />
        <button type="button" aria-label="Messages" className="mr-[15px] flex shrink-0">
          <Svg>
            <path d="M12 1.500q11.500 0 11.500 9.500 0 6-4.500 8.200V24l-5.500-3.800Q.5 20.500.5 11 .5 1.500 12 1.500z" fill="#5a5a5a" />
            <circle cx="6.500" cy="11" r="1.800" fill="#fff" /><circle cx="12" cy="11" r="1.800" fill="#fff" /><circle cx="17.500" cy="11" r="1.800" fill="#fff" />
          </Svg>
        </button>
        <svg viewBox="0 0 12 12" className="size-3 shrink-0 self-end" aria-hidden="true">
          <path d="M8 0h3v3H8zM4 4h3v3H4zM8 4h3v3H8zM0 8h3v3H0zM4 8h3v3H4zM8 8h3v3H8z" fill="#bcbcbc" />
        </svg>
      </footer>
    </div>
  );
}
